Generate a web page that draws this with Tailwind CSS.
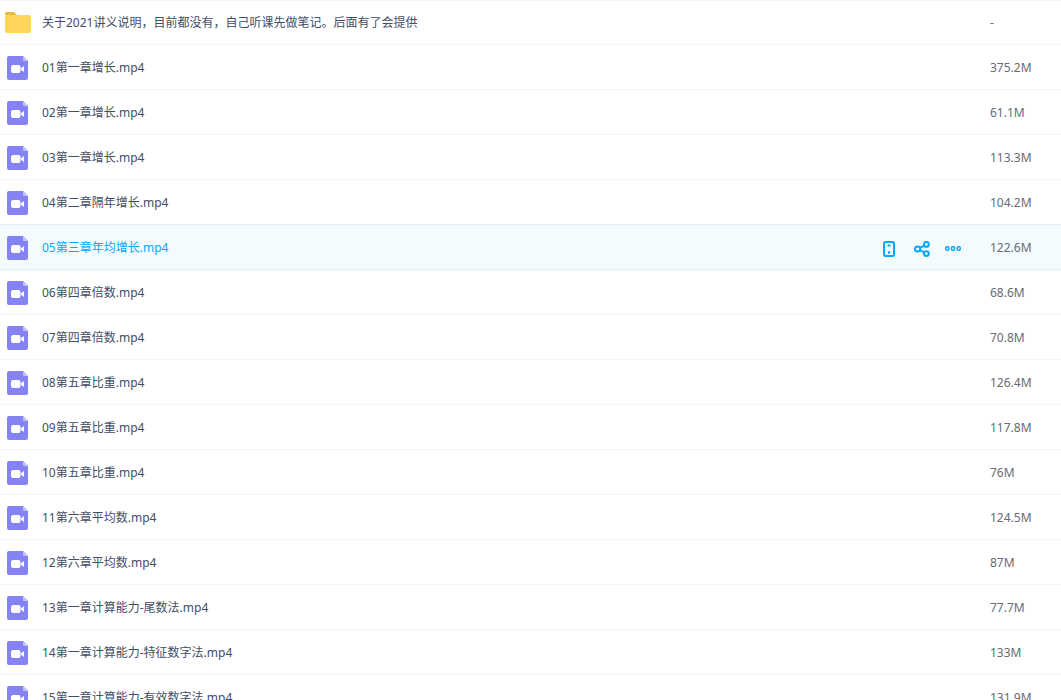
<!DOCTYPE html>
<html lang="zh-CN">
<head>
<meta charset="utf-8">
<script src="https://cdn.jsdelivr.net/npm/@tailwindcss/browser@4"></script>
</head>
<body class="bg-white overflow-hidden">
<svg width="0" height="0" class="absolute">
  <defs>
    <symbol id="video" viewBox="0 0 21 24">
      <path d="M2 0H16L21 5V22a2 2 0 0 1-2 2H2a2 2 0 0 1-2-2V2a2 2 0 0 1 2-2Z" fill="#8583f4"/>
      <path d="M16 0L21 5H17a1 1 0 0 1-1-1Z" fill="#c3c2fa"/>
      <rect x="4" y="9" width="9.5" height="8" rx="2" fill="#fff"/>
      <path d="M14 12.2L17 10V16L14 13.8Z" fill="#fff"/>
    </symbol>
  </defs>
</svg>
<div class="h-[700px] overflow-hidden font-['Noto_Sans','Noto_Sans_CJK_SC',sans-serif] text-[12px] text-[#424e67]">

  <div class="h-[45px] flex items-center border-y border-[#f4f6fb] box-border">
    <div class="w-[42px] shrink-0 pl-[5px]">
      <svg width="26" height="21" viewBox="0 0 26 21" class="block"><path d="M0 2a2 2 0 0 1 2-2h7l3 3H0Z" fill="#e8b93f"/><rect x="0" y="3" width="26" height="18" rx="2" fill="#ffd659"/></svg>
    </div>
    <div class="flex-1">关于2021讲义说明，目前都没有，自己听课先做笔记。后面有了会提供</div>
    <div class="w-[71px] shrink-0 text-[#666b75]">-</div>
  </div>

  <div class="h-[45px] pt-[2px] flex items-center border-b border-[#f4f6fb] box-border"><div class="w-[42px] shrink-0 pl-[7px]"><svg width="21" height="24" class="block"><use href="#video"/></svg></div><div class="flex-1">01第一章增长.mp4</div><div class="w-[71px] shrink-0 text-[#666b75]">375.2M</div></div>
  <div class="h-[45px] pt-[2px] flex items-center border-b border-[#f4f6fb] box-border"><div class="w-[42px] shrink-0 pl-[7px]"><svg width="21" height="24" class="block"><use href="#video"/></svg></div><div class="flex-1">02第一章增长.mp4</div><div class="w-[71px] shrink-0 text-[#666b75]">61.1M</div></div>
  <div class="h-[45px] pt-[2px] flex items-center border-b border-[#f4f6fb] box-border"><div class="w-[42px] shrink-0 pl-[7px]"><svg width="21" height="24" class="block"><use href="#video"/></svg></div><div class="flex-1">03第一章增长.mp4</div><div class="w-[71px] shrink-0 text-[#666b75]">113.3M</div></div>
  <div class="h-[45px] pt-[2px] flex items-center border-b border-[#dfeefb] box-border"><div class="w-[42px] shrink-0 pl-[7px]"><svg width="21" height="24" class="block"><use href="#video"/></svg></div><div class="flex-1">04第二章隔年增长.mp4</div><div class="w-[71px] shrink-0 text-[#666b75]">104.2M</div></div>

  <div class="h-[45px] pt-[2px] flex items-center border-b border-[#dfeefb] box-border bg-[#f3fbff]">
    <div class="w-[42px] shrink-0 pl-[7px]"><svg width="21" height="24" class="block"><use href="#video"/></svg></div>
    <div class="flex-1 text-[#06a7ff]">05第三章年均增长.mp4</div>
    <div class="flex items-center mr-[29px] mt-[1px]">
      <svg width="14" height="16" viewBox="0 0 14 16" fill="none" stroke="#06a7ff" stroke-width="2" class="block"><rect x="3" y="1" width="10" height="14" rx="1.5"/><path d="M6.5 4.5h3"/><path d="M7 11.5h2" stroke-width="2.6"/></svg>
      <svg width="16" height="16" viewBox="0 0 16 16" fill="none" stroke="#06a7ff" stroke-width="2" class="block ml-[19px]"><circle cx="3.6" cy="8" r="2.6"/><circle cx="12.4" cy="3.4" r="2.4"/><circle cx="12.4" cy="12.6" r="2.4"/><path d="M6 6.8L10.2 4.6M6 9.2L10.2 11.4"/></svg>
      <svg width="16" height="5" viewBox="0 0 16 5" fill="none" stroke="#06a7ff" stroke-width="1.5" class="block ml-[15px]"><rect x="0.8" y="0.8" width="3" height="3.4" rx="1"/><rect x="6.5" y="0.8" width="3" height="3.4" rx="1"/><rect x="12.2" y="0.8" width="3" height="3.4" rx="1"/></svg>
    </div>
    <div class="w-[71px] shrink-0 text-[#666b75]">122.6M</div>
  </div>

  <div class="h-[45px] pt-[2px] flex items-center border-b border-[#f4f6fb] box-border"><div class="w-[42px] shrink-0 pl-[7px]"><svg width="21" height="24" class="block"><use href="#video"/></svg></div><div class="flex-1">06第四章倍数.mp4</div><div class="w-[71px] shrink-0 text-[#666b75]">68.6M</div></div>
  <div class="h-[45px] pt-[2px] flex items-center border-b border-[#f4f6fb] box-border"><div class="w-[42px] shrink-0 pl-[7px]"><svg width="21" height="24" class="block"><use href="#video"/></svg></div><div class="flex-1">07第四章倍数.mp4</div><div class="w-[71px] shrink-0 text-[#666b75]">70.8M</div></div>
  <div class="h-[45px] pt-[2px] flex items-center border-b border-[#f4f6fb] box-border"><div class="w-[42px] shrink-0 pl-[7px]"><svg width="21" height="24" class="block"><use href="#video"/></svg></div><div class="flex-1">08第五章比重.mp4</div><div class="w-[71px] shrink-0 text-[#666b75]">126.4M</div></div>
  <div class="h-[45px] pt-[2px] flex items-center border-b border-[#f4f6fb] box-border"><div class="w-[42px] shrink-0 pl-[7px]"><svg width="21" height="24" class="block"><use href="#video"/></svg></div><div class="flex-1">09第五章比重.mp4</div><div class="w-[71px] shrink-0 text-[#666b75]">117.8M</div></div>
  <div class="h-[45px] pt-[2px] flex items-center border-b border-[#f4f6fb] box-border"><div class="w-[42px] shrink-0 pl-[7px]"><svg width="21" height="24" class="block"><use href="#video"/></svg></div><div class="flex-1">10第五章比重.mp4</div><div class="w-[71px] shrink-0 text-[#666b75]">76M</div></div>
  <div class="h-[45px] pt-[2px] flex items-center border-b border-[#f4f6fb] box-border"><div class="w-[42px] shrink-0 pl-[7px]"><svg width="21" height="24" class="block"><use href="#video"/></svg></div><div class="flex-1">11第六章平均数.mp4</div><div class="w-[71px] shrink-0 text-[#666b75]">124.5M</div></div>
  <div class="h-[45px] pt-[2px] flex items-center border-b border-[#f4f6fb] box-border"><div class="w-[42px] shrink-0 pl-[7px]"><svg width="21" height="24" class="block"><use href="#video"/></svg></div><div class="flex-1">12第六章平均数.mp4</div><div class="w-[71px] shrink-0 text-[#666b75]">87M</div></div>
  <div class="h-[45px] pt-[2px] flex items-center border-b border-[#f4f6fb] box-border"><div class="w-[42px] shrink-0 pl-[7px]"><svg width="21" height="24" class="block"><use href="#video"/></svg></div><div class="flex-1">13第一章计算能力-尾数法.mp4</div><div class="w-[71px] shrink-0 text-[#666b75]">77.7M</div></div>
  <div class="h-[45px] pt-[2px] flex items-center border-b border-[#f4f6fb] box-border"><div class="w-[42px] shrink-0 pl-[7px]"><svg width="21" height="24" class="block"><use href="#video"/></svg></div><div class="flex-1">14第一章计算能力-特征数字法.mp4</div><div class="w-[71px] shrink-0 text-[#666b75]">133M</div></div>
  <div class="h-[45px] pt-[2px] flex items-center border-b border-[#f4f6fb] box-border"><div class="w-[42px] shrink-0 pl-[7px]"><svg width="21" height="24" class="block"><use href="#video"/></svg></div><div class="flex-1">15第一章计算能力-有效数字法.mp4</div><div class="w-[71px] shrink-0 text-[#666b75]">131.9M</div></div>
</div>
</body>
</html>
